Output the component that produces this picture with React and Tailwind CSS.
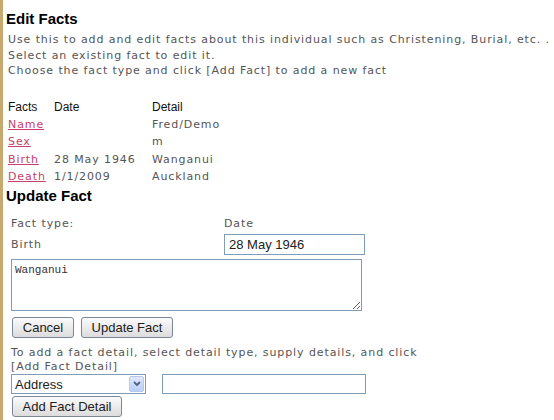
import React, { useState } from 'react'

const facts = [
    { name: 'Name', date: '', detail: 'Fred/Demo' },
    { name: 'Sex', date: '', detail: 'm' },
    { name: 'Birth', date: '28 May 1946', detail: 'Wanganui' },
    { name: 'Death', date: '1/1/2009', detail: 'Auckland' },
]

const btn = 'h-[21px] px-[7px] rounded-[3px] border border-[#7a8797] bg-gradient-to-b from-[#fbfbfb] to-[#dcdcdc] text-[13px] text-[#222] font-["Liberation_Sans",Arial,sans-serif] leading-none tracking-normal'

export default function App() {
    const [date, setDate] = useState('28 May 1946')
    const [detail, setDetail] = useState('Wanganui')
    const [type, setType] = useState('Address')
    const [extra, setExtra] = useState('')

    return (
        <div className="flex min-h-[420px] w-[554px] bg-white">
            <div className="w-[3px] shrink-0 bg-[#c9a870]" />
            <div className="flex-1 pl-[4px] pt-[10px] font-['DejaVu_Sans',Verdana,sans-serif] text-[11px] tracking-[0.9px] text-[#555]">
                <h2 className="-ml-[1px] font-['Liberation_Sans',Arial,sans-serif] text-[15px] font-bold leading-[18px] tracking-normal text-black">Edit Facts</h2>
                <div className="mt-[4px] pl-[1px] leading-[15.5px]">
                    <div>Use this to add and edit facts about this individual such as Christening, Burial, etc. .</div>
                    <div>Select an existing fact to edit it.</div>
                    <div>Choose the fact type and click [Add Fact] to add a new fact</div>
                </div>

                <table className="mt-[20px] ml-[1px] border-separate border-spacing-0">
                    <thead>
                        <tr className="text-left text-[#111] font-['Liberation_Sans',Arial,sans-serif] text-[12px] tracking-normal">
                            <th className="w-[46px] font-normal leading-[17px]">Facts</th>
                            <th className="w-[98px] font-normal leading-[17px]">Date</th>
                            <th className="font-normal leading-[17px]">Detail</th>
                        </tr>
                    </thead>
                    <tbody className="leading-[17.5px]">
                        {facts.map(f => (
                            <tr key={f.name}>
                                <td><a href="#" className="text-[#c8406a] underline">{f.name}</a></td>
                                <td>{f.date}</td>
                                <td>{f.detail}</td>
                            </tr>
                        ))}
                    </tbody>
                </table>

                <h2 className="-ml-[1px] mt-[1px] font-['Liberation_Sans',Arial,sans-serif] text-[15px] font-bold leading-[18px] tracking-normal text-black">Update Fact</h2>

                <div className="mt-[9px] pl-[4px]">
                    <div className="flex">
                        <div className="w-[213px] leading-[20px]">Fact type:</div>
                        <div className="leading-[20px]">Date</div>
                    </div>
                    <div className="flex items-center">
                        <div className="w-[213px] pt-[2px]">Birth</div>
                        <input
                            className="h-[21px] w-[141px] border border-[#7f9db9] px-[4px] font-['Liberation_Sans',Arial,sans-serif] text-[13px] tracking-normal text-[#222] outline-none"
                            value={date}
                            onChange={e => setDate(e.target.value)}
                        />
                    </div>
                    <textarea
                        className="mt-[4px] block h-[52px] w-[351px] resize border border-[#7f9db9] px-[3px] py-[2px] font-['Liberation_Mono','Courier_New',monospace] text-[11px] tracking-normal text-[#333] outline-none"
                        value={detail}
                        onChange={e => setDetail(e.target.value)}
                    />
                    <div className="mt-[6px] flex gap-[7px] pl-[1px]">
                        <button className={btn + ' w-[62px]'}>Cancel</button>
                        <button className={btn + ' w-[92px]'}>Update Fact</button>
                    </div>
                    <div className="mt-[8px] leading-[14px]">
                        To add a fact detail, select detail type, supply details, and click<br />[Add Fact Detail]
                    </div>
                    <div className="flex items-center gap-[16px]">
                        <div className="relative h-[20px] w-[135px] border border-[#7f9db9] bg-white">
                            <select
                                className="h-full w-full appearance-none bg-transparent pl-[3px] font-['Liberation_Sans',Arial,sans-serif] text-[13px] tracking-normal text-[#222] outline-none"
                                value={type}
                                onChange={e => setType(e.target.value)}
                            >
                                <option>Address</option>
                                <option>Occupation</option>
                                <option>Note</option>
                            </select>
                            <div className="pointer-events-none absolute right-[1px] top-[1px] flex h-[16px] w-[15px] items-center justify-center rounded-[2px] border border-[#b6c8ef] bg-gradient-to-b from-[#dfe8fd] to-[#b9cdf7]">
                                <svg width="8" height="6" viewBox="0 0 8 6">
                                    <path d="M1 1 L4 4 L7 1" stroke="#4d6185" strokeWidth="1.8" fill="none" />
                                </svg>
                            </div>
                        </div>
                        <input
                            className="h-[20px] w-[204px] border border-[#7f9db9] px-[3px] font-['Liberation_Sans',Arial,sans-serif] text-[13px] tracking-normal outline-none"
                            value={extra}
                            onChange={e => setExtra(e.target.value)}
                        />
                    </div>
                    <button className={btn + ' mt-[2px] ml-[1px] w-[110px] tracking-[-0.3px]'}>Add Fact Detail</button>
                </div>
            </div>
        </div>
    )
}
